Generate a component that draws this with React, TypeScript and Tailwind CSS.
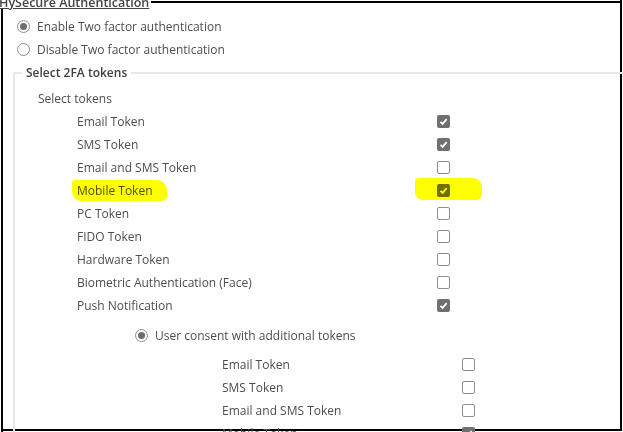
import React from 'react';

type Token = { label: string; checked: boolean; highlight?: boolean };

const mainTokens: Token[] = [
  { label: 'Email Token', checked: true },
  { label: 'SMS Token', checked: true },
  { label: 'Email and SMS Token', checked: false },
  { label: 'Mobile Token', checked: true, highlight: true },
  { label: 'PC Token', checked: false },
  { label: 'FIDO Token', checked: false },
  { label: 'Hardware Token', checked: false },
  { label: 'Biometric Authentication (Face)', checked: false },
  { label: 'Push Notification', checked: true },
];

const consentTokens: Token[] = [
  { label: 'Email Token', checked: false },
  { label: 'SMS Token', checked: false },
  { label: 'Email and SMS Token', checked: false },
  { label: 'Mobile Token', checked: true },
];

function Checkbox({ checked }: { checked: boolean }) {
  if (checked) {
    return (
      <span className="flex h-[13px] w-[13px] items-center justify-center rounded-[2px] bg-[#707070]">
        <svg width="9" height="9" viewBox="0 0 10 10">
          <path d="M1.6 5.4 L4 7.7 L8.5 2.3" stroke="#fff" strokeWidth="2" fill="none" />
        </svg>
      </span>
    );
  }
  return <span className="block h-[13px] w-[13px] rounded-[2px] border border-[#8e8e8e] bg-white" />;
}

function Radio({ checked }: { checked: boolean }) {
  return (
    <span className="flex h-[13px] w-[13px] shrink-0 items-center justify-center rounded-full border border-[#8f8f8f] bg-white">
      {checked && <span className="h-[7px] w-[7px] rounded-full bg-[#6e6e6e]" />}
    </span>
  );
}

function Marker({ className }: { className: string }) {
  return <span aria-hidden className={`pointer-events-none absolute bg-[#ffff00] mix-blend-multiply ${className}`} />;
}

export default function App() {
  return (
    <div className="h-[432px] w-[623px] overflow-hidden bg-white px-px pb-px font-['Open_Sans',sans-serif] text-[12px] text-[#4e4e4e]">
      <div className="flex h-full flex-col border-r-2 border-b-2 border-black">
        {/* title strip, scrolled mostly out of view */}
        <div className="-mt-[5px] flex h-[14px] items-center">
          <span className="-ml-[2px] pr-[2px] text-[12.5px] font-semibold leading-[19px] text-[#444] underline">
            HySecure Authentication
          </span>
          <span className="h-[2px] flex-1 bg-black" />
        </div>

        <div className="flex-1 border-l-2 border-black pt-[6px]">
          <label className="flex h-[23px] items-center gap-[7px] pl-[14px]">
            <Radio checked />
            <span>Enable Two factor authentication</span>
          </label>
          <label className="flex h-[23px] items-center gap-[7px] pl-[14px]">
            <Radio checked={false} />
            <span>Disable Two factor authentication</span>
          </label>

          <fieldset className="mt-[3px] -mr-[10px] ml-[10px] border-2 border-[#e8e8e8]">
            <legend className="ml-[7px] px-[4px] font-semibold leading-[17px] text-[#404040]">Select 2FA tokens</legend>

            <div className="mt-[7px] flex h-[22px] items-center pl-[23px]">Select tokens</div>

            <div className="pl-[62px]">
              {mainTokens.map((t) => (
                <div key={t.label} className="grid h-[23px] grid-cols-[360px_13px] items-center">
                  <span className="relative">
                    {t.label}
                    {t.highlight && <Marker className="-left-[5px] -top-[2px] h-[21px] w-[95px] rounded-[3px_10px_5px_9px]" />}
                  </span>
                  <span className="relative">
                    <Checkbox checked={t.checked} />
                    {t.highlight && <Marker className="-left-[22px] -top-[6px] h-[22px] w-[67px] rounded-[4px_9px_6px_8px]" />}
                  </span>
                </div>
              ))}
            </div>

            <label className="mt-[7px] flex h-[23px] items-center gap-[7px] pl-[120px]">
              <Radio checked />
              <span>User consent with additional tokens</span>
            </label>

            <div className="mt-[6px] pl-[207px]">
              {consentTokens.map((t) => (
                <div key={t.label} className="grid h-[23px] grid-cols-[240px_13px] items-center">
                  <span>{t.label}</span>
                  <Checkbox checked={t.checked} />
                </div>
              ))}
            </div>
          </fieldset>
        </div>
      </div>
    </div>
  );
}
